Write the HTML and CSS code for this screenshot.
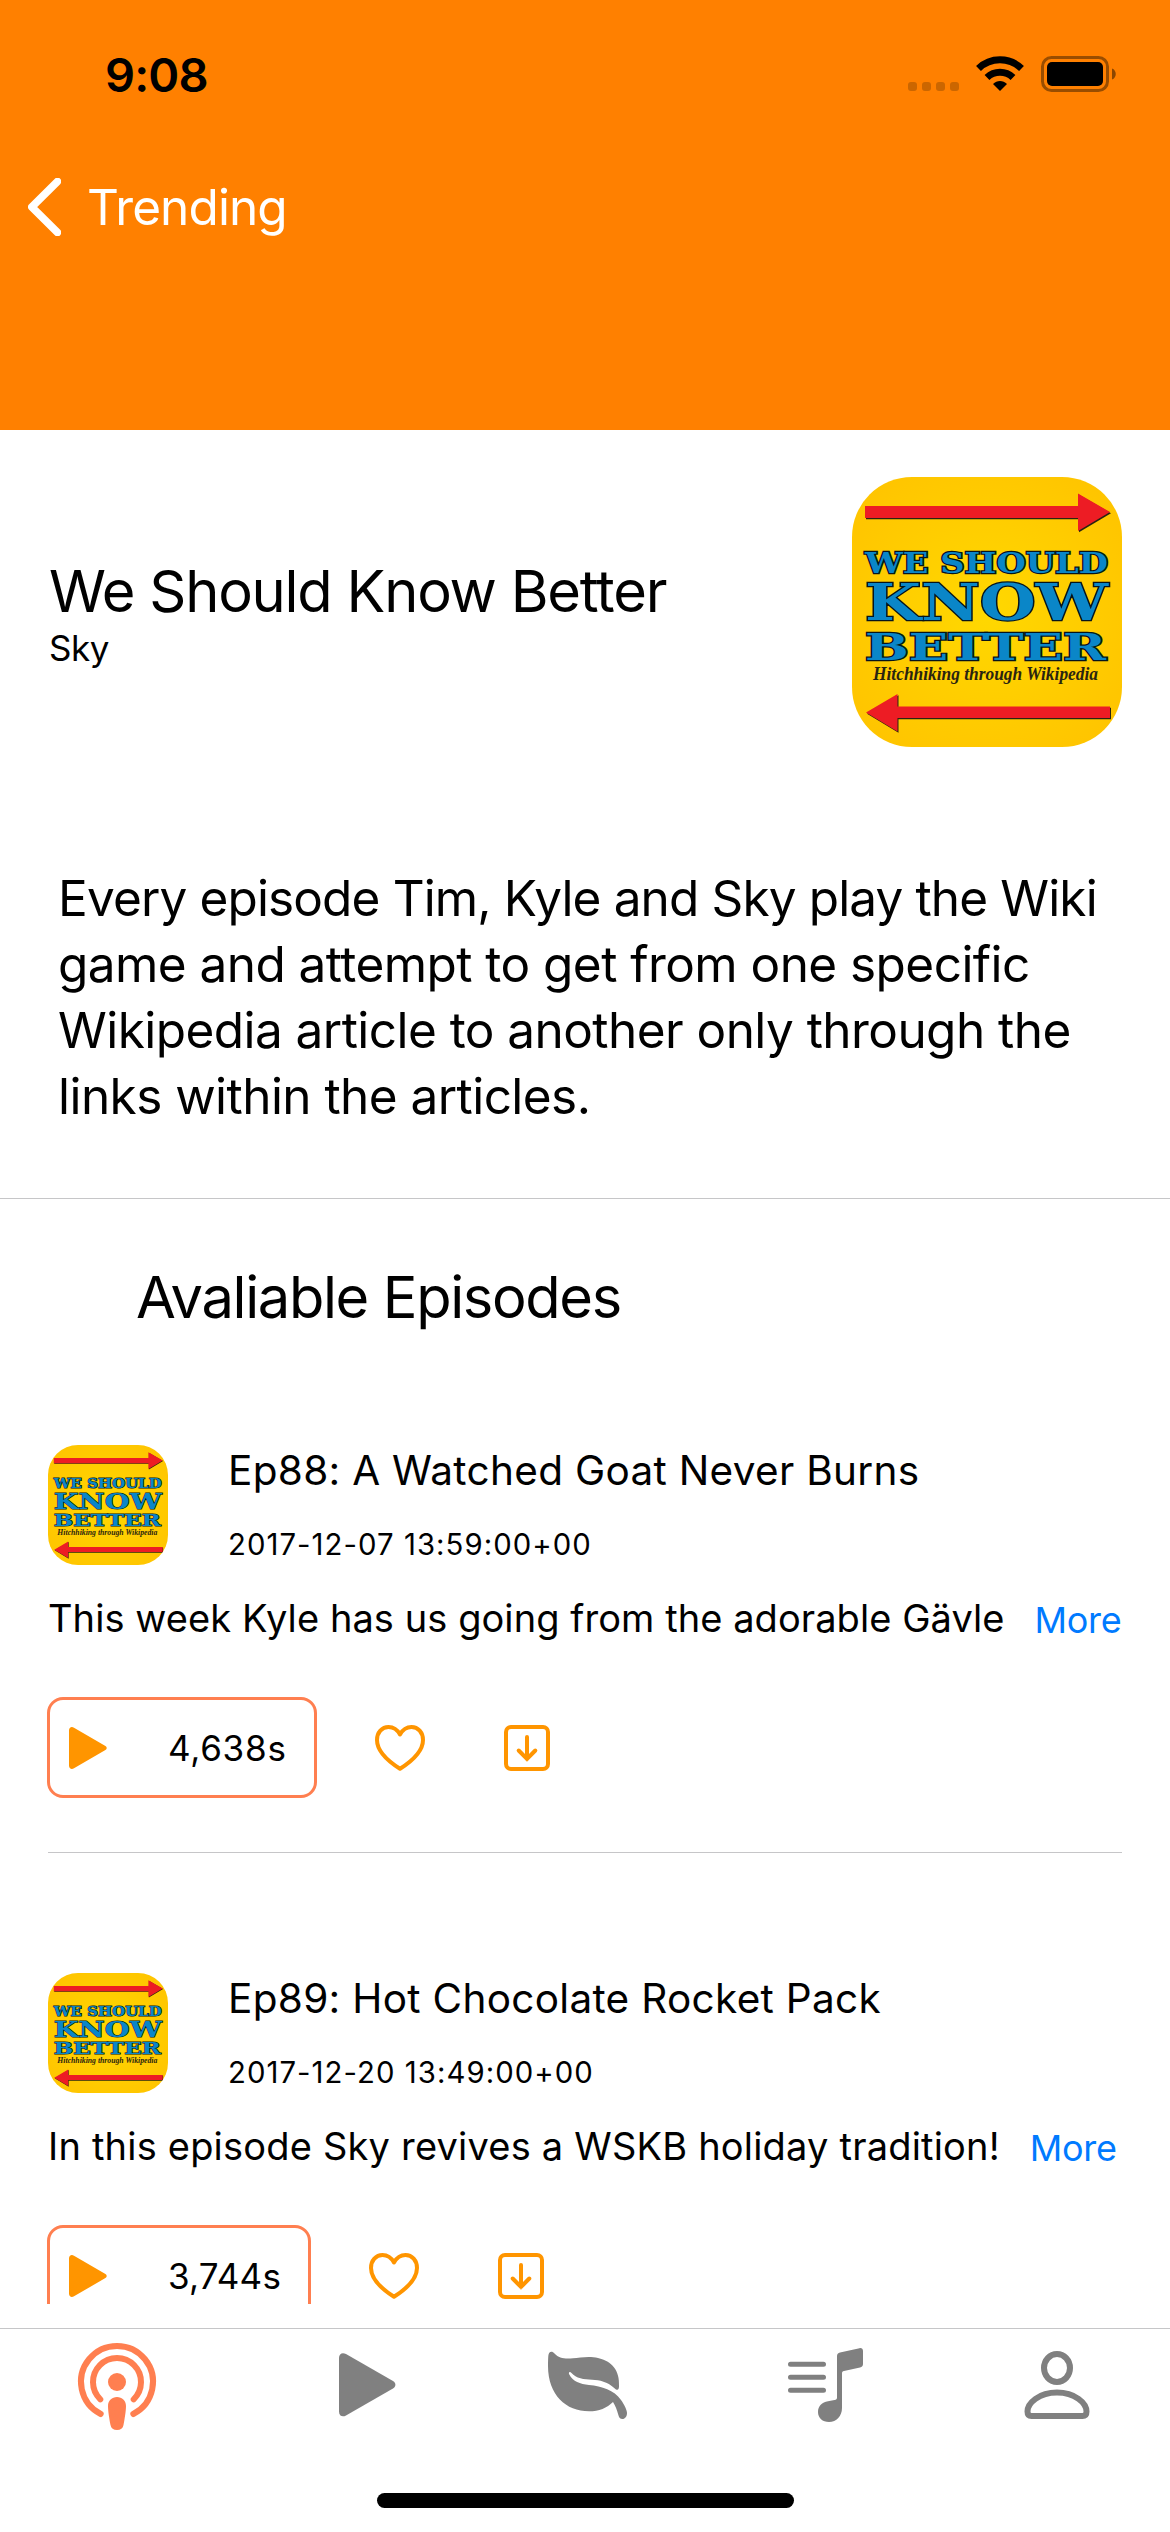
FILE: index.html
```html
<!DOCTYPE html>
<html lang="en">
<head>
<meta charset="utf-8">
<title>We Should Know Better</title>
<link rel="stylesheet" href="styles.css">
</head>
<body>
<svg class="sprite" aria-hidden="true">
  <defs>
    <radialGradient id="sun" cx="50%" cy="50%" r="70%">
      <stop offset="0" stop-color="#ffd800"/>
      <stop offset="1" stop-color="#ffc200"/>
    </radialGradient>
  </defs>
  <symbol id="cover" viewBox="0 0 270 270">
    <rect width="270" height="270" fill="url(#sun)"/>
    <g fill="#2a2410" transform="translate(1 1.2)">
      <path d="M13 29H226V16.5L258 35L226 54V41H13Z"/>
      <path d="M258 229.500H45.500V217L14 235.500L45.500 254.500V241H258Z"/>
    </g>
    <g fill="#ed1c24">
      <path d="M13 29H226V16.5L258 35L226 54V41H13Z"/>
      <path d="M258 229.500H45.500V217L14 235.500L45.500 254.500V241H258Z"/>
    </g>
    <g class="cover-title">
      <text x="13" y="96" font-size="27" textLength="243" lengthAdjust="spacingAndGlyphs">WE SHOULD</text>
      <text x="13" y="143" font-size="51" textLength="243" lengthAdjust="spacingAndGlyphs">KNOW</text>
      <text x="13" y="182.500" font-size="37" textLength="241" lengthAdjust="spacingAndGlyphs">BETTER</text>
    </g>
    <text class="cover-sub" x="21" y="203" textLength="225" lengthAdjust="spacingAndGlyphs">Hitchhiking through Wikipedia</text>
  </symbol>
  <symbol id="play" viewBox="0 0 38 42">
    <path d="M0 3.500C0 .5 2.500-.8 5 .7L36 18.700C38.300 20 38.300 22 36 23.300L5 41.300C2.500 42.800 0 41.500 0 38.500Z"/>
  </symbol>
  <symbol id="heart" viewBox="0 0 50 46">
    <path d="M25 9.500C22.500 5 18.500 2 13.500 2C7 2 2 7.500 2 15C2 26 12 35.500 25 43.800C38 35.500 48 26 48 15C48 7.500 43 2 36.500 2C31.500 2 27.500 5 25 9.500Z"/>
  </symbol>
  <symbol id="download" viewBox="0 0 46 46">
    <rect x="2" y="2" width="42" height="42" rx="5"/>
    <path d="M23 12V34M14.700 25.500L23 34L31.300 25.500"/>
  </symbol>
</svg>

<div class="screen">
  <header class="top">
    <div class="status">
      <span class="time">9:08</span>
      <svg class="status-icons" width="208" height="38" viewBox="0 0 208 38">
        <g opacity=".2">
          <rect x="0" y="27" width="9" height="9" rx="3"/>
          <rect x="14" y="27" width="9" height="9" rx="3"/>
          <rect x="28" y="27" width="9" height="9" rx="3"/>
          <rect x="42" y="27" width="9" height="9" rx="3"/>
        </g>
        <path d="M92 36L85 29C89 25 95 25 99 29Z"/>
        <path fill="none" stroke="#000" stroke-width="7" d="M79 22.500A19 19 0 0 1 105 22.500M70.500 13.500A31 31 0 0 1 113.500 13.500"/>
        <rect x="134.500" y="2.500" width="65" height="33" rx="9" fill="none" stroke="#000" stroke-width="3" opacity=".4"/>
        <rect x="139" y="7" width="56" height="24" rx="5"/>
        <path d="M204 13.500C209 15 209 23 204 24.500Z" opacity=".45"/>
      </svg>
    </div>
    <nav class="back">
      <svg width="33" height="58" viewBox="0 0 33 58"><path d="M29.500 3.500L3.800 29L29.500 54.500"/></svg>
      <span>Trending</span>
    </nav>
  </header>

  <main class="content">
    <section class="show">
      <div>
        <h1>We Should Know Better</h1>
        <p class="author">Sky</p>
      </div>
      <svg class="art"><use href="#cover"/></svg>
    </section>
    <p class="about">Every episode Tim, Kyle and Sky play the Wiki<br>game and attempt to get from one specific<br>Wikipedia article to another only through the<br>links within the articles.</p>
    <h2>Avaliable Episodes</h2>

    <article class="episode">
      <div class="lead">
        <svg class="thumb"><use href="#cover"/></svg>
        <div class="meta">
          <h3>Ep88: A Watched Goat Never Burns</h3>
          <time>2017-12-07 13:59:00+00</time>
        </div>
      </div>
      <div class="summary"><p class="tight">This week Kyle has us going from the adorable Gävle</p><a>More</a></div>
      <div class="actions">
        <button class="play"><svg><use href="#play"/></svg><span>4,638s</span></button>
        <svg class="heart"><use href="#heart"/></svg>
        <svg class="download"><use href="#download"/></svg>
      </div>
    </article>

    <article class="episode">
      <div class="lead">
        <svg class="thumb"><use href="#cover"/></svg>
        <div class="meta">
          <h3>Ep89: Hot Chocolate Rocket Pack</h3>
          <time>2017-12-20 13:49:00+00</time>
        </div>
      </div>
      <div class="summary"><p>In this episode Sky revives a WSKB holiday tradition!</p><a>More</a></div>
      <div class="actions">
        <button class="play narrow"><svg><use href="#play"/></svg><span>3,744s</span></button>
        <svg class="heart"><use href="#heart"/></svg>
        <svg class="download"><use href="#download"/></svg>
      </div>
    </article>
  </main>

  <footer class="bottom">
    <nav class="tabs">
      <svg class="active" viewBox="0 0 120 120">
        <g transform="translate(60 53)">
          <path class="line" d="M-16.300 32A36 36 0 1 1 16.300 32M-16.700 17.300A24 24 0 1 1 16.700 17.300"/>
          <circle r="9"/>
          <path d="M-9 24C-9 18.500-5 15 0 15S9 18.500 9 24C9 29 7.500 38 6.500 43C6 46.300 3.500 48 0 48S-6 46.300-6.500 43C-7.500 38-9 29-9 24Z"/>
        </g>
      </svg>
      <svg viewBox="0 0 120 120">
        <path d="M48 29C48 24.500 51.500 23 55 25L102 52C105.200 54 105.200 57.500 102 59.500L55 86.500C51.500 88.500 48 87 48 82.500Z"/>
      </svg>
      <svg viewBox="0 0 120 120">
        <g transform="translate(5 -9)">
          <path d="M18.300 36C18.500 31.500 22 30.500 24.500 33.500C29 38.500 35 39 43 38.300C50 37.500 60 36 68 38C82 41 90 51 89 66C89 70 87.500 71 84.500 68.300C77 61.500 70 60.300 62 59.800C54 59.300 46 58.500 41.500 53C40 51 38 52 39.300 54.500C43 61.500 50 64 59 65C72 66.300 84 70 91 80C94.500 85 97 90 97 93C97 96.500 95 99 92.500 99C90 99 89 97.500 88.200 94.500C87 90 85.500 86 83 82C77 88 69 91.300 59 91.300C36 91.300 18 75 18 46C18 42 18.100 39 18.300 36Z"/>
        </g>
      </svg>
      <svg viewBox="0 0 120 120">
        <g transform="translate(11 -9)">
          <path class="bars" d="M20.500 44.300H53.500M20.500 57.300H53.500M20.500 70.300H53.500"/>
          <path d="M67 36C67 34 68 33 70 32.500L89.500 28.200C91.500 27.800 93 28.800 93 31V44C93 46 92 47 90 47.500L74 51C72.500 51.300 72 52 72 53.500V88C72 96 66.500 102 59 102C52.500 102 48 98 48 92C48 86 52 82.500 58 81.300L64.500 80C66.300 79.600 67 79 67 77.500Z"/>
        </g>
      </svg>
      <svg viewBox="0 0 120 120">
        <ellipse class="line" cx="64" cy="39" rx="13" ry="14"/>
        <path class="line" d="M34.500 82.500C34.500 74 46 63.500 64 63.500S93.500 74 93.500 82.500C93.500 85.500 92 87 89.500 87H38.500C36 87 34.500 85.500 34.500 82.500Z"/>
      </svg>
    </nav>
    <div class="home"></div>
  </footer>
</div>
</body>
</html>
```
FILE: styles.css
```css
* { box-sizing: border-box; }
body {
  margin: 0;
  background: #fff;
  color: #000;
  font-family: Inter, "Liberation Sans", sans-serif;
}
h1, h2, h3, p { margin: 0; font-weight: 400; }
svg { display: block; flex: none; }
.sprite { position: absolute; width: 0; height: 0; }

.screen {
  width: 1170px;
  height: 2532px;
  display: flex;
  flex-direction: column;
  overflow: hidden;
}

/* Header */
.top { flex: none; height: 430px; background: #ff8000; }
.status {
  height: 149px;
  padding: 0 54px 0 105px;
  display: flex;
  align-items: center;
  justify-content: space-between;
}
.time { font-size: 47px; font-weight: 600; line-height: 60px; letter-spacing: -0.85px; }
.status-icons { margin-bottom: 1px; }
.back {
  height: 116px;
  padding-left: 28px;
  display: flex;
  align-items: center;
  gap: 26px;
  color: #fff;
  font-size: 49.500px;
  line-height: 60px;
  letter-spacing: -0.9px;
}
.back path {
  fill: none;
  stroke: #fff;
  stroke-width: 7.500px;
  stroke-linecap: round;
  stroke-linejoin: round;
}

/* Scrolling content, cut off above the tab bar */
.content { flex: none; height: 1874px; overflow: hidden; }
.show {
  height: 435px;
  padding: 47px 48px 0 49px;
  display: flex;
  justify-content: space-between;
}
.show > div { height: 270px; display: flex; flex-direction: column; justify-content: center; }
h1 { font-size: 57.800px; line-height: 72px; letter-spacing: -1.210px; }
.author { font-size: 35px; line-height: 43px; letter-spacing: -0.5px; }
.art { width: 270px; height: 270px; border-radius: 60px; }
.about {
  height: 334px;
  padding-left: 58px;
  border-bottom: 1px solid #c6c6c8;
  font-size: 49.500px;
  line-height: 66px;
  letter-spacing: -0.550px;
}
.about::first-line { letter-spacing: -0.860px; }
h2 {
  padding: 70px 0 0 136px;
  font-size: 57.800px;
  line-height: 56px;
  letter-spacing: -1.360px;
}
.cover-title {
  font-family: "DejaVu Serif", serif;
  font-weight: 700;
  fill: #0a86c8;
  stroke: #06141c;
  stroke-width: 2.400px;
  paint-order: stroke;
}
.cover-sub {
  font-family: "Liberation Serif", serif;
  font-size: 19px;
  font-style: italic;
  font-weight: 700;
  fill: #2a2410;
}

/* Episodes */
.episode {
  height: 528px;
  margin: 0 48px;
  padding-top: 120px;
  border-bottom: 1px solid #c6c6c8;
}
.lead { display: flex; gap: 60px; height: 120px; }
.thumb { width: 120px; height: 120px; border-radius: 30px; }
.meta { display: flex; flex-direction: column; gap: 30px; padding-top: 1px; }
h3 { font-size: 40.500px; line-height: 50px; letter-spacing: 0.310px; }
time { font-size: 29.300px; line-height: 38px; letter-spacing: 1.060px; }
.summary {
  display: flex;
  align-items: center;
  gap: 30px;
  height: 46px;
  margin-top: 30px;
  font-size: 38px;
  line-height: 46px;
  letter-spacing: 0.200px;
  white-space: nowrap;
}
.summary .tight { letter-spacing: 0.070px; }
.summary a { color: #007aff; font-size: 36px; letter-spacing: -0.3px; padding-top: 3px; }
.actions {
  display: flex;
  align-items: center;
  height: 101px;
  margin: 56px 0 0 -1.500px;
}
.play {
  height: 101px;
  padding: 0 27px 0 19.500px;
  display: flex;
  align-items: center;
  gap: 61px;
  background: none;
  border: 3px solid #ff7f50;
  border-radius: 16px;
  color: #000;
  font: 400 35px/44px Inter, sans-serif;
  letter-spacing: 0.760px;
}
.play.narrow { letter-spacing: 0.200px; }
.play svg { width: 38px; height: 42px; fill: #ff9500; }
.heart, .download {
  fill: none;
  stroke: #ff9500;
  stroke-width: 4px;
}
.heart { width: 50px; height: 46px; margin-left: 58px; stroke-linejoin: round; }
.download { width: 46px; height: 46px; margin-left: 79px; stroke-linecap: round; }

/* Tab bar */
.bottom {
  flex: none;
  height: 204px;
  margin-top: 24px;
  border-top: 1px solid #c6c6c8;
}
.tabs { display: grid; grid-template-columns: repeat(5, 1fr); justify-items: center; fill: #808080; stroke: none; color: #808080; }
.tabs svg { width: 120px; height: 120px; }
.tabs .active { fill: #ff7f50; color: #ff7f50; }
.tabs .line, .tabs .bars { fill: none; stroke: currentColor; stroke-width: 6px; stroke-linecap: round; }
.tabs .bars { stroke-width: 5px; }
.home { width: 417px; height: 15px; margin: 44px auto 0; border-radius: 8px; background: #000; }
```
